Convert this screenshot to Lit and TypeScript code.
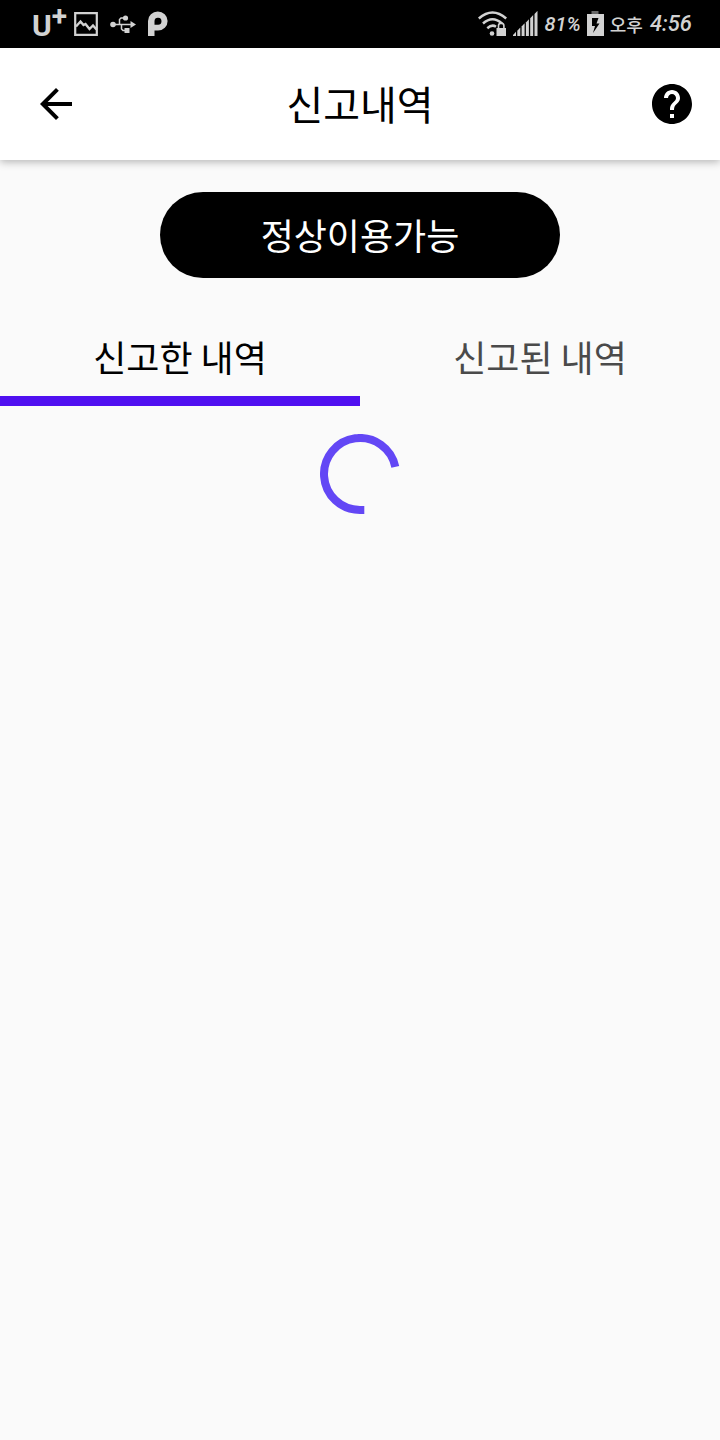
import { LitElement, html, css, svg } from "lit";
import { customElement, property, state } from "lit/decorators.js";

@customElement("status-bar")
class StatusBar extends LitElement {
  static styles = css`
    :host {
      display: flex;
      justify-content: space-between;
      align-items: center;
      height: 48px;
      padding: 0 28px 0 32px;
      background: #000;
      color: #d2d2d2;
      font-family: Roboto, "Noto Sans CJK KR", sans-serif;
      font-size: 22px;
      line-height: 48px;
      white-space: nowrap;
    }
    .group {
      display: flex;
      align-items: center;
    }
    .icons {
      gap: 12px;
    }
    .info {
      gap: 6px;
    }
    .carrier {
      display: flex;
      align-items: flex-start;
      height: 48px;
      margin-right: -5px;
      font-weight: 700;
      font-size: 30px;
      line-height: 51px;
    }
    .plus {
      font-size: 28px;
      line-height: 34px;
    }
    .figures {
      font-style: italic;
      font-weight: 500;
    }
    .level {
      font-size: 20px;
    }
    .clock {
      display: flex;
      gap: 7px;
    }
    .period {
      font-family: "Noto Sans CJK KR", sans-serif;
      font-size: 18px;
      font-weight: 500;
    }
    svg {
      display: block;
      fill: currentColor;
    }
  `;

  private bars() {
    return [0, 1, 2, 3, 4, 5].map((i) => {
      const x = i * 4.3;
      const top = 24 - (x + 3.4) * 0.97;
      return svg`<path d="M${x} 25V${top + 3.2}L${x + 3} ${top}V25Z" />`;
    });
  }

  render() {
    return html`
      <div class="group icons">
        <div class="carrier"><span>U</span><span class="plus">+</span></div>
        <svg width="24" height="24" viewBox="0 0 24 24" role="img" aria-label="Image">
          <path d="M1.200 1.200h21.600v21.600H1.200z" fill="none" stroke="currentColor" stroke-width="2.200" />
          <path d="M2 14.500L6.500 9.500l3 3.500 2-1 4 5 3.500-3.500L22.500 17.500" fill="none" stroke="currentColor" stroke-width="2.400" />
        </svg>
        <svg width="26" height="20" viewBox="0 0 26 20" role="img" aria-label="USB">
          <circle cx="3" cy="10.500" r="2.800" />
          <path d="M20.500 7L26 10.500 20.500 14z" />
          <path d="M3 10.500h19M9.500 10.500V5.500L11 4h4M11.500 10.500V15L13 16.500h3" fill="none" stroke="currentColor" stroke-width="1.500" />
          <circle cx="15.500" cy="4" r="2.600" />
          <path d="M14.500 14h5v5h-5z" />
        </svg>
        <svg width="20" height="26" viewBox="0 0 20 26" role="img" aria-label="App">
          <path
            fill-rule="evenodd"
            d="M0 25V10A9.800 9.500 0 1 1 10 19.600H6.500V25zM6.500 13.800H9.800A3.500 3.500 0 1 0 6.500 10z"
          />
        </svg>
      </div>
      <div class="group info">
        <svg width="29" height="26" viewBox="0 0 29 26" role="img" aria-label="Wi-Fi">
          <g fill="none" stroke="currentColor" stroke-width="2.500">
            <path d="M.8 7.500Q14.500-4.500 28.200 7.500" />
            <path d="M5 12.500Q14.500 4 24 12.500" />
            <path d="M9.300 17.200Q14 13 18 15.700" />
            <path d="M20.500 17v-2.200a2.700 2.700 0 0 1 5.400 0V17" stroke-width="1.600" />
          </g>
          <circle cx="14" cy="22.500" r="2.300" />
          <path d="M18.500 17h9.500v8h-9.500z" />
        </svg>
        <svg width="25" height="26" viewBox="0 0 25 26" role="img" aria-label="Signal">${this.bars()}</svg>
        <span class="figures level">81%</span>
        <svg width="17" height="26" viewBox="0 0 17 26" role="img" aria-label="Charging">
          <path d="M4.500 0h7v3h-7z" fill="#666" />
          <path fill-rule="evenodd" d="M0 3h17v22H0zM5 7v8h3l-2 7 6.500-9.500H9.500L11.500 7z" />
        </svg>
        <span class="clock"><span class="period">오후</span><span class="figures">4:56</span></span>
      </div>
    `;
  }
}

@customElement("top-bar")
class TopBar extends LitElement {
  @property() heading = "";

  static styles = css`
    :host {
      position: relative;
      display: flex;
      align-items: center;
      justify-content: space-between;
      height: 112px;
      padding: 0 24px;
      background: #fff;
      box-shadow: 0 2px 8px rgba(0, 0, 0, 0.28);
    }
    h1 {
      margin: 0;
      padding-bottom: 2px;
      font-size: 40px;
      line-height: 56px;
      font-weight: 400;
    }
    button {
      display: flex;
      justify-content: flex-end;
      width: 56px;
      padding: 0;
      border: 0;
      background: none;
      color: #000;
      cursor: pointer;
    }
    svg {
      fill: currentColor;
    }
  `;

  render() {
    return html`
      <button aria-label="뒤로">
        <svg width="48" height="48" viewBox="0 0 24 24">
          <path d="M20 11H7.830l5.590-5.590L12 4l-8 8 8 8 1.410-1.410L7.830 13H20v-2z" />
        </svg>
      </button>
      <h1>${this.heading}</h1>
      <button aria-label="도움말">
        <svg width="48" height="48" viewBox="0 0 24 24">
          <path
            d="M12 2C6.480 2 2 6.480 2 12s4.480 10 10 10 10-4.480 10-10S17.520 2 12 2zm1 17h-2v-2h2v2zm2.070-7.750l-.9.920C13.450 12.900 13 13.500 13 15h-2v-.5c0-1.100.45-2.100 1.170-2.830l1.240-1.260c.37-.36.59-.86.59-1.410 0-1.100-.9-2-2-2s-2 .9-2 2H8c0-2.210 1.790-4 4-4s4 1.790 4 4c0 .88-.36 1.680-.93 2.250z"
          />
        </svg>
      </button>
    `;
  }
}

@customElement("app-root")
class AppRoot extends LitElement {
  @state() private active = 0;

  private tabs = ["신고한 내역", "신고된 내역"];

  static styles = css`
    :host {
      display: flex;
      flex-direction: column;
      min-height: 100vh;
      background: #fafafa;
      color: #000;
      font-family: "Noto Sans CJK KR", sans-serif;
    }
    button {
      border: 0;
      font: inherit;
      cursor: pointer;
    }
    .status {
      align-self: center;
      min-width: 400px;
      height: 86px;
      margin: 32px 0;
      padding: 0 48px 2px;
      border-radius: 43px;
      background: #000;
      color: #fff;
      font-size: 36px;
      line-height: 52px;
    }
    .tabs {
      display: grid;
      grid-template-columns: 1fr 1fr;
    }
    .tab {
      height: 96px;
      padding: 6px 0 0;
      border-bottom: 10px solid transparent;
      background: none;
      color: #4a4a4a;
      font-size: 36px;
      line-height: 52px;
    }
    .tab.active {
      color: #000;
      border-bottom-color: #4f10f0;
    }
    .panel {
      display: flex;
      justify-content: center;
      padding: 28px 0;
    }
    .spinner {
      fill: none;
      stroke: #6347f5;
      stroke-width: 8;
    }
  `;

  render() {
    return html`
      <status-bar></status-bar>
      <top-bar heading="신고내역"></top-bar>
      <button class="status">정상이용가능</button>
      <div class="tabs" role="tablist">
        ${this.tabs.map(
          (label, i) => html`
            <button
              class="tab ${i === this.active ? "active" : ""}"
              role="tab"
              aria-selected=${i === this.active}
              @click=${() => (this.active = i)}
            >${label}</button>
          `
        )}
      </div>
      <div class="panel" role="tabpanel">
        <svg class="spinner" width="80" height="80" viewBox="0 0 80 80" role="progressbar" aria-label="로딩 중">
          <path d="M75.300 32.900A36 36 0 1 0 40 76H44.300" />
        </svg>
      </div>
    `;
  }
}
